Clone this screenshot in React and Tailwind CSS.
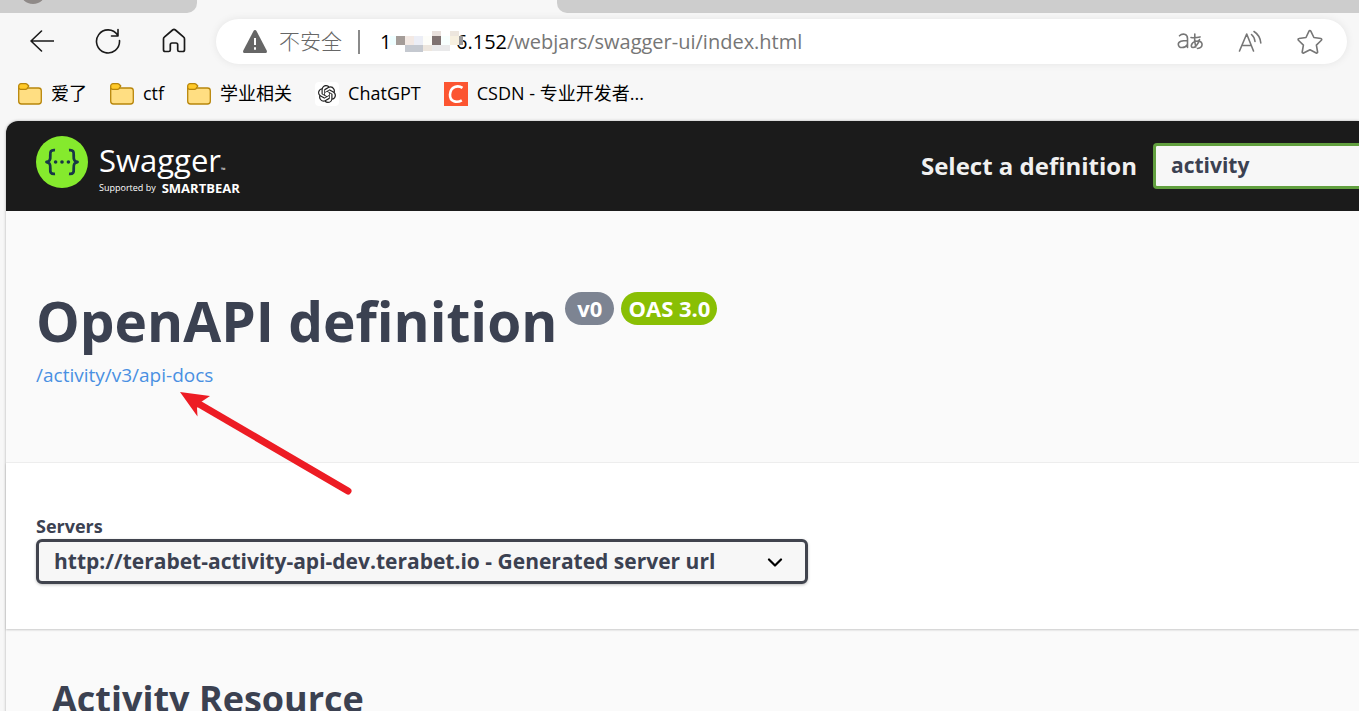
import { useState } from "react";
import { SiOpenai } from "react-icons/si";

const UI_FONT = "font-['Open_Sans','Noto_Sans_CJK_SC',sans-serif]";

const SERVER = "http://terabet-activity-api-dev.terabet.io - Generated server url";

// blurred part of the host: x, y, width, height, fill
const MOSAIC = [
  [42, 0, 9, 5, "#e8e0dc"],
  [60, 0, 9, 5, "#ede6de"],
  [0, 5, 6, 9, "#effeff"],
  [6, 5, 9, 9, "#a49c98"],
  [15, 5, 9, 9, "#f3e9e4"],
  [24, 5, 9, 9, "#eceef6"],
  [33, 5, 9, 9, "#fdfdf9"],
  [42, 5, 9, 9, "#7f7271"],
  [51, 5, 9, 9, "#f8fffe"],
  [60, 5, 9, 9, "#f7f0e0"],
  [69, 5, 4, 9, "#9a999b"],
  [15, 14, 18, 7, "#c5c9d0"],
  [33, 14, 9, 6, "#ede6de"],
  [42, 14, 18, 6, "#e9e9ea"],
];

function FolderIcon() {
  return (
    <svg width="24" height="22" viewBox="0 0 24 22" stroke="#b8860b" strokeWidth="1.3" strokeLinejoin="round">
      <path d="M.7 5h19.8a2.8 2.8 0 0 1 2.8 2.8v10.4a2.8 2.8 0 0 1-2.8 2.8h-17A2.8 2.8 0 0 1 .7 18.2Z" fill="#ffde82" />
      <path d="M.7 4.5V3A2.3 2.3 0 0 1 3 .7h4.6c.6 0 1.1.2 1.5.6l1.700 1.700L9 5.700c-.4.4-.9.6-1.500.6H2.500A1.800 1.800 0 0 1 .7 4.500Z" fill="#ffc928" />
    </svg>
  );
}

function CsdnIcon() {
  return (
    <svg width="24" height="24" viewBox="0 0 24 24">
      <rect width="24" height="24" fill="#fc5531" />
      <path d="M18.5 5.8C14 3 6.5 4.2 6 12.5c-.3 7.5 7 8.500 11.800 5.800" fill="none" stroke="#fff" strokeWidth="2.6" />
    </svg>
  );
}

function ChatIcon() {
  return (
    <span className="flex h-6 w-6 items-center justify-center rounded bg-white">
      <SiOpenai size={18} color="#222" />
    </span>
  );
}

const BOOKMARKS = [
  { label: "爱了", icon: FolderIcon },
  { label: "ctf", icon: FolderIcon },
  { label: "学业相关", icon: FolderIcon },
  { label: "ChatGPT", icon: ChatIcon },
  { label: "CSDN - 专业开发者...", icon: CsdnIcon },
];

function TabStrip() {
  return (
    <div className="flex h-[13px] overflow-hidden">
      <div className="w-[197px] shrink-0 rounded-br-[10px] bg-[#cdcdcd] pl-5">
        <div className="-mt-[22px] h-[26px] w-[26px] rounded-full bg-[#8f8a88]" />
      </div>
      <div className="w-[360px] shrink-0" />
      <div className="flex-1 rounded-bl-[10px] bg-[#cdcdcd]" />
    </div>
  );
}

function Toolbar() {
  return (
    <div className="flex h-[57px] items-center pr-3">
      <div className="flex w-[216px] shrink-0 items-center justify-between px-[30px] pb-0.5 text-[#1a1a1a]">
        <button aria-label="后退">
          <svg width="24" height="22" viewBox="0 0 24 22" fill="none" stroke="currentColor" strokeWidth="1.6" strokeLinecap="round" strokeLinejoin="round">
            <path d="M23.5 11H1M11.5 1 1 11l10.5 10" />
          </svg>
        </button>
        <button aria-label="刷新">
          <svg width="26" height="26" viewBox="0 0 26 26" fill="none" stroke="currentColor" strokeWidth="1.6" strokeLinecap="round" strokeLinejoin="round">
            <path d="M24.5 12.5A11.5 11.5 0 1 1 22.6 7M23 1.500V8h-6.500" />
          </svg>
        </button>
        <button aria-label="主页">
          <svg width="24" height="25" viewBox="0 0 24 25" fill="none" stroke="currentColor" strokeWidth="1.7" strokeLinejoin="round">
            <path d="M10.6 2 2.3 9.2c-.5.4-.8 1-.8 1.7v10.8c0 1.1.7 1.8 1.8 1.8h3.4c.9 0 1.6-.7 1.6-1.6v-5.2c0-1 .7-1.7 1.7-1.7h4c1 0 1.7.7 1.7 1.7v5.2c0 .9.7 1.6 1.6 1.6h3.400c1.100 0 1.800-.7 1.800-1.800V10.900c0-.7-.3-1.300-.8-1.700L13.400 2c-.8-.7-2-.7-2.800 0Z" />
          </svg>
        </button>
      </div>

      <div className="flex h-[45px] min-w-0 flex-1 items-center rounded-full bg-white pl-[27px] pr-6 shadow-[0_0_8px_rgba(0,0,0,0.08)]">
        <svg width="24" height="23" viewBox="0 0 24 23" className="shrink-0">
          <path d="M10.5 1a1.7 1.7 0 0 1 3 0l10.2 19.5c.6 1.2-.1 2.5-1.5 2.5H1.8C.4 23-.3 21.7.3 20.5Z" fill="#666" />
          <path d="M12 8v7M12 17.3v2.4" stroke="#fff" strokeWidth="2" />
        </svg>
        <span className="ml-3 shrink-0 text-[21px] font-light text-[#666]">不安全</span>
        <span className="ml-4 h-6 w-0.5 shrink-0 bg-[#8a8a8a]" />
        <span className="relative ml-5 flex w-[127px] shrink-0 justify-between text-[20px] text-black">
          <span>1</span>
          <span>6.152</span>
          <svg width="73" height="21" viewBox="0 0 73 21" className="absolute left-2.5 top-1" shapeRendering="crispEdges">
            {MOSAIC.map(([x, y, w, h, fill]) => (
              <rect key={`${x}-${y}`} x={x} y={y} width={w} height={h} fill={fill} />
            ))}
          </svg>
        </span>
        <input
          aria-label="地址"
          defaultValue="/webjars/swagger-ui/index.html"
          className="min-w-0 flex-1 bg-transparent text-[20px] text-[#767676] outline-none"
        />
        <div className="flex shrink-0 items-center gap-[34px] text-[#767676]">
          <button aria-label="翻译">
            <svg width="27" height="20" viewBox="0 0 27 20" fill="none" stroke="currentColor" strokeWidth="1.6" strokeLinecap="round">
              <path d="M2.5 3.8C5 1.3 10.500 1.300 10.500 6.500v9M10.500 8.500C5 8.500 1.300 9 1.300 12.300c0 4.500 7 4 9.200.2" />
              <path d="M14 5.500c3 .4 6 .2 9-.6M17.800 2c-.5 5-.3 9 1 13M22.500 7.500c-1 4-4 8-6.500 8-3.500 0-1.500-6.500 5-6.500 5.500 0 5.500 7-.5 7.500" />
            </svg>
          </button>
          <button aria-label="朗读此页内容">
            <svg width="25" height="24" viewBox="0 0 25 24" fill="none" stroke="currentColor" strokeWidth="1.6" strokeLinecap="round" strokeLinejoin="round">
              <path d="M1.5 21 8.7 4l6.8 17M4 15.500h9.200M13.500 4.500c2 1.700 3.200 4 3.500 7M16 1.500c4 2.500 6.300 6.500 6.800 11.500" />
            </svg>
          </button>
          <button aria-label="收藏">
            <svg width="26" height="26" viewBox="0 0 26 26" fill="none" stroke="currentColor" strokeWidth="1.6" strokeLinejoin="round">
              <path d="m12 2.200-3 6.300-7 1c-.9.1-1.200 1.100-.6 1.700l5 4.900-1.200 6.900c-.1.800.7 1.400 1.400 1l6.400-3.300 6.200 3.300c.7.400 1.500-.2 1.400-1l-1.200-6.900 5-4.900c.6-.6.300-1.600-.5-1.700l-7-1-3.100-6.300c-.4-.8-1.500-.8-1.800 0Z" />
            </svg>
          </button>
        </div>
      </div>
    </div>
  );
}

function BookmarksBar() {
  return (
    <nav className="flex h-[51px] items-center gap-[23px] pb-1 pl-[18px] text-[18px] text-black">
      {BOOKMARKS.map((b) => (
        <a key={b.label} href="#" className="flex items-center gap-[9px] whitespace-nowrap">
          <b.icon />
          {b.label}
        </a>
      ))}
    </nav>
  );
}

function SwaggerLogo() {
  return (
    <a href="#" className="flex items-start gap-[11px] text-white">
      <svg width="52" height="52" viewBox="0 0 52 52">
        <circle cx="26" cy="26" r="26" fill="#85ea2d" />
        <g fill="none" stroke="#173647" strokeWidth="2.8" strokeLinejoin="round">
          <path d="M19 14.200c-4.200-.4-5 1.200-4.700 5.300.3 4.500-.6 6-3.800 6.500 3.200.5 4.100 2 3.800 6.500-.3 4.100.5 5.700 4.700 5.300" />
          <path d="M33 14.200c4.200-.4 5 1.200 4.700 5.300-.3 4.500.6 6 3.800 6.500-3.200.5-4.100 2-3.800 6.500.3 4.100-.5 5.700-4.700 5.300" />
        </g>
        <g fill="#173647">
          <circle cx="19.6" cy="26" r="1.8" />
          <circle cx="26" cy="26" r="1.8" />
          <circle cx="32.4" cy="26" r="1.8" />
        </g>
      </svg>
      <span className="flex flex-col pt-1">
        <span className="flex items-end text-[31px] leading-10">
          Swagger<span className="text-[6px] leading-5">™</span>
        </span>
        <span className="flex items-center gap-1.5 text-[9px] leading-4">
          Supported by <b className="text-[13px] font-bold">SMARTBEAR</b>
        </span>
      </span>
    </a>
  );
}

function Topbar() {
  const [definition, setDefinition] = useState("activity");
  return (
    <header className="flex h-[90px] items-center justify-between rounded-tl-xl bg-[#1b1b1b] pl-[30px]">
      <SwaggerLogo />
      <div className="flex items-center gap-4">
        <label htmlFor="definition" className="text-[24px] font-bold text-[#f0f0f0]">
          Select a definition
        </label>
        <select
          id="definition"
          value={definition}
          onChange={(e) => setDefinition(e.target.value)}
          className="h-[46px] w-[206px] appearance-none rounded-l border-[3px] border-r-0 border-[#62a03f] bg-[#f7f7f7] pl-[15px] text-[21px] font-bold text-[#3b4151]"
        >
          <option>activity</option>
        </select>
      </div>
    </header>
  );
}

function Info() {
  return (
    <section className="h-[252px] border-b border-[#f0f0f0] bg-[#fafafa] pl-[30px] pt-[74px]">
      <div className="flex items-start gap-2">
        <h1 className="text-[55px] font-bold leading-[72px]">OpenAPI definition</h1>
        <div className="mt-[7px] flex gap-[7px] text-[22px] font-bold leading-[33px] text-white">
          <span className="rounded-full bg-[#7d8492] px-3">v0</span>
          <span className="rounded-full bg-[#89bf04] px-[7px]">OAS 3.0</span>
        </div>
      </div>
      <div className="relative mt-0.5 flex">
        <a href="#" className="text-[19px] leading-8 text-[#4990e2]">/activity/v3/api-docs</a>
        <svg width="174" height="106" viewBox="0 0 174 106" className="pointer-events-none absolute left-[143px] top-8 z-10">
          <path d="M20 13 169 100" stroke="#ed1c24" strokeWidth="7" strokeLinecap="round" />
          <path d="M1 1 31 5 22 11 18 17 18.5 25.5Z" fill="#ed1c24" />
        </svg>
      </div>
    </section>
  );
}

function Servers() {
  const [server, setServer] = useState(SERVER);
  return (
    <section className="relative flex h-[166px] flex-col items-start bg-white pl-[30px] pt-[50px] shadow-[0_1px_2px_rgba(0,0,0,0.2)]">
      <label htmlFor="servers" className="text-[18px] font-bold leading-[26px]">Servers</label>
      <div className="relative">
        <select
          id="servers"
          value={server}
          onChange={(e) => setServer(e.target.value)}
          className="h-[45px] w-[772px] appearance-none rounded-md border-[3px] border-[#41444e] bg-[#f7f7f7] pl-[15px] text-[21px] font-bold shadow-[0_1px_3px_rgba(0,0,0,0.25)]"
        >
          <option>{SERVER}</option>
        </select>
        <svg width="16" height="10" viewBox="0 0 16 10" fill="none" stroke="#000" strokeWidth="2.2" strokeLinecap="round" strokeLinejoin="round" className="pointer-events-none absolute right-[25px] top-[19px]">
          <path d="m2 1.500 6 6 6-6" />
        </svg>
      </div>
    </section>
  );
}

export default function App() {
  return (
    <div className={`h-screen overflow-hidden bg-[#f7f7f7] ${UI_FONT}`}>
      <TabStrip />
      <Toolbar />
      <BookmarksBar />
      <main className="ml-1.5 min-h-screen rounded-tl-xl bg-[#fafafa] text-[#3b4151] shadow-[0_0_3px_rgba(0,0,0,0.3)]">
        <Topbar />
        <Info />
        <Servers />
        <h2 className="pl-[46px] pt-[42px] text-[36px] font-bold leading-[56px]">Activity Resource</h2>
      </main>
    </div>
  );
}
